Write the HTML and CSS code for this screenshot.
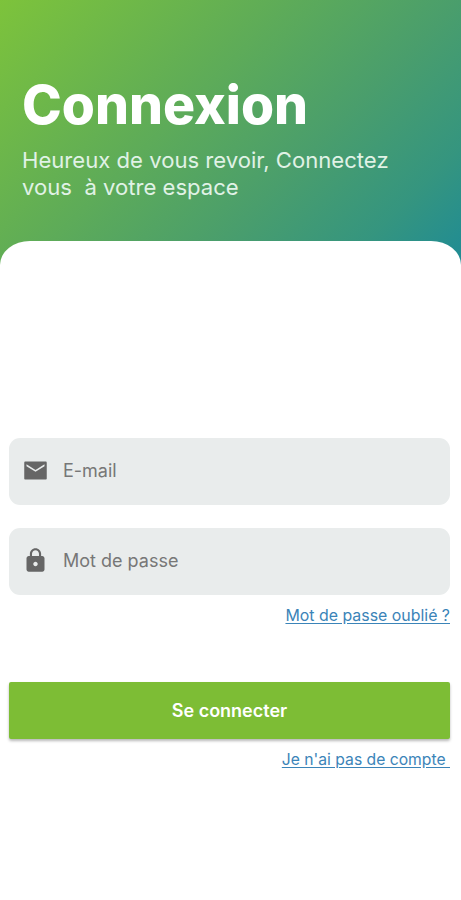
FILE: index.html
```html
<!DOCTYPE html>
<html lang="fr">
<head>
<meta charset="utf-8">
<title>Connexion</title>
<link rel="stylesheet" href="styles.css">
</head>
<body>
<header class="hero">
  <h1 class="hero-title">Connexion</h1>
  <p class="hero-sub">Heureux de vous revoir, Connectez<br>vous&nbsp; à votre espace</p>
</header>
<main class="sheet">
  <div class="field">
    <svg class="field-icon" viewBox="0 0 24 24" width="27" height="27"><path d="M21 4H3c-.6 0-1 .4-1 1v14c0 .6.4 1 1 1h18c.6 0 1-.4 1-1V5c0-.6-.4-1-1-1zm-1 4.200-8 5-8-5V6.500l8 5 8-5v1.700z"/></svg>
    <span class="field-label">E-mail</span>
  </div>
  <div class="field field-second">
    <svg class="field-icon" viewBox="0 0 24 24" width="27" height="27"><path d="M18 8h-1V6c0-2.760-2.240-5-5-5S7 3.240 7 6v2H6c-1.100 0-2 .9-2 2v10c0 1.100.9 2 2 2h12c1.100 0 2-.9 2-2V10c0-1.100-.9-2-2-2zm-6 9c-1.100 0-2-.9-2-2s.9-2 2-2 2 .9 2 2-.9 2-2 2zm3.100-9H8.900V6c0-1.710 1.390-3.100 3.100-3.100s3.100 1.390 3.100 3.100v2z"/></svg>
    <span class="field-label">Mot de passe</span>
  </div>
  <a class="link link-forgot" href="#">Mot de passe oublié ?</a>
  <button class="submit" type="button">Se connecter</button>
  <a class="link link-account" href="#">Je n'ai pas de compte&nbsp;</a>
</main>
</body>
</html>
```
FILE: styles.css
```css
* { box-sizing: border-box; }
html, body { margin: 0; height: 100%; }
body {
  width: 461px;
  height: 900px;
  overflow: hidden;
  background: #fff;
  font-family: Inter, "Liberation Sans", sans-serif;
}
.hero {
  height: 281px;
  padding: 76px 22px 0;
  background: linear-gradient(135deg, #7dc33b 0%, #60ad56 36%, #4a9e6c 62%, #35957f 82%, #1c8a98 100%);
  color: #fff;
}
.hero-title {
  margin: 0;
  font-size: 53.500px;
  line-height: 58px;
  font-weight: 800;
}
.hero-sub {
  margin: 13px 0 0;
  font-size: 22.100px;
  line-height: 27px;
  font-weight: 400;
  color: #e0f2e6;
}
.sheet {
  display: flex;
  flex-direction: column;
  height: 659px;
  margin-top: -40px;
  padding: 197px 11px 0 9px;
  background: #fff;
  border-radius: 30px 30px 0 0 / 24px 24px 0 0;
}
.field {
  display: flex;
  align-items: center;
  gap: 14px;
  height: 67px;
  padding: 0 0 2px 13px;
  background: #e9ecec;
  border-radius: 11px;
}
.field-second { margin-top: 23px; }
.field-icon { fill: #666; flex: none; }
.field-label {
  font-size: 18px;
  color: #777;
}
.link {
  align-self: flex-end;
  font-size: 15.700px;
  line-height: 20px;
  color: #3b84b8;
  text-decoration: underline;
  text-underline-offset: 2px;
}
.link-forgot {
  margin-top: 11px;
  font-size: 15.900px;
}
.submit {
  height: 57px;
  margin-top: 56px;
  border: 0;
  border-radius: 2px;
  background: #7dbd35;
  box-shadow: 0 2px 3px rgba(0, 0, 0, .28);
  color: #fff;
  font-family: inherit;
  font-size: 18px;
  font-weight: 600;
}
.link-account { margin-top: 11px; }
```
